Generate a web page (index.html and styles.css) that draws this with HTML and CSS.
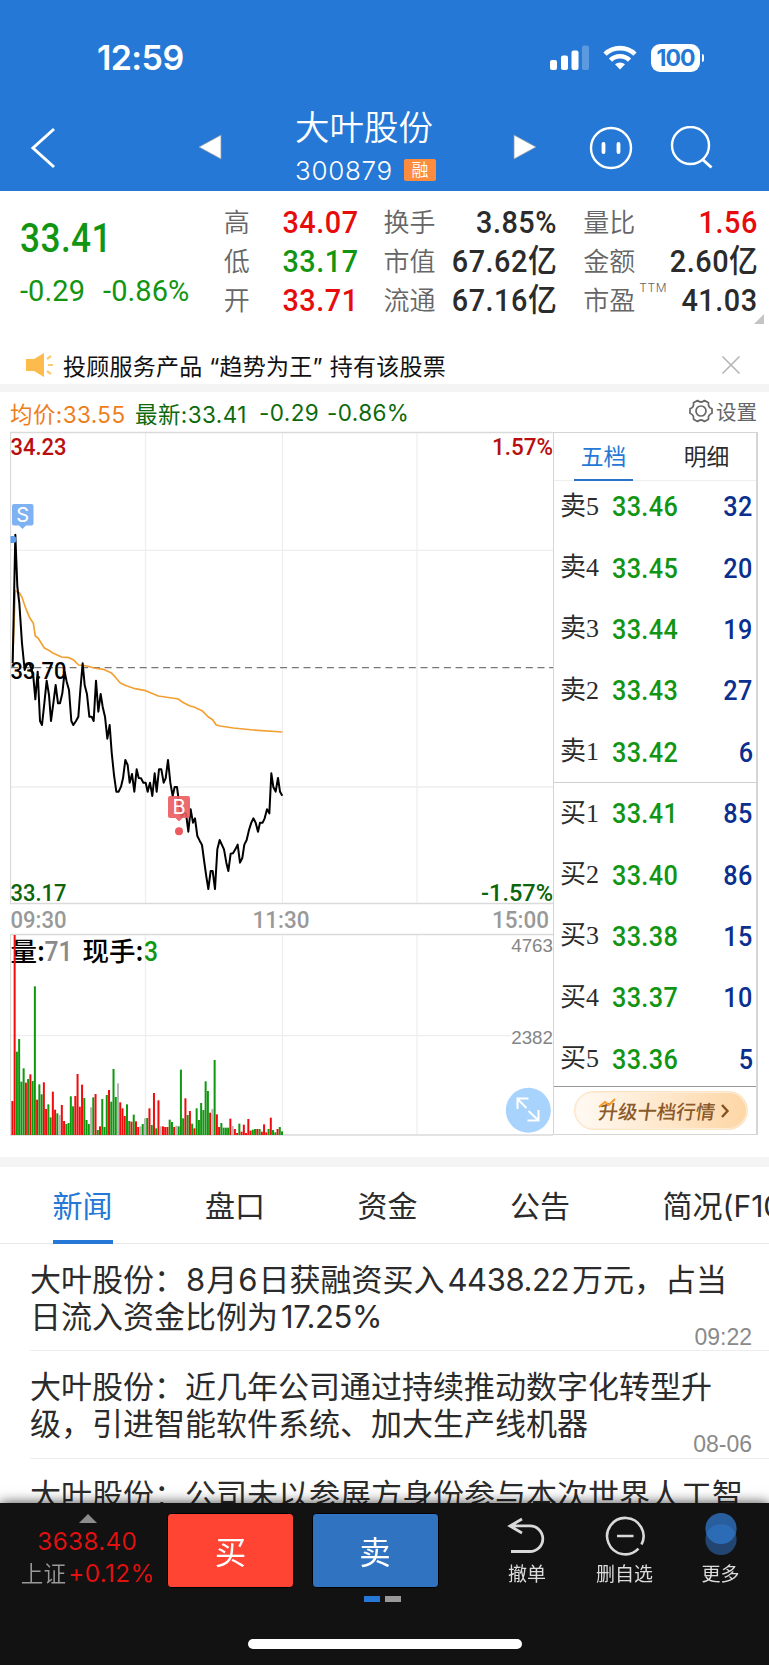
FILE: index.html
```html
<!DOCTYPE html>
<html lang="zh-CN">
<head>
  <meta charset="UTF-8">
  <title>大叶股份 300879</title>
  <meta name="viewport" content="width=device-width, initial-scale=1.0">
  <link rel="stylesheet" href="styles.css">
</head>
<body>
  <header class="header">
    <div class="status-bar">
      <span class="clock">12:59</span>
      <div class="status-icons">
        <svg width="40" height="26" viewBox="0 0 40 26" fill="#fff">
          <rect x="0" y="15" width="7" height="10" rx="2"/>
          <rect x="11" y="10.500" width="7" height="14.500" rx="2"/>
          <rect x="21.500" y="5.500" width="7" height="19.500" rx="2"/>
          <rect x="32" y="0.500" width="7" height="24.500" rx="2" opacity=".25"/>
        </svg>
        <svg class="wifi" width="34" height="25" viewBox="0 0 34 25" fill="none" stroke="#fff" stroke-width="4.600">
          <path d="M2 9.200a21.500 21.500 0 0 1 30 0"/>
          <path d="M7.500 15.200a13.500 13.500 0 0 1 19 0"/>
          <path d="M17 24.500l-5-5.200a7.500 7.500 0 0 1 10 0z" fill="#fff" stroke="none"/>
        </svg>
        <span class="battery">100</span>
        <span class="battery-tip"></span>
      </div>
    </div>
    <nav class="title-bar">
      <svg class="back" width="26" height="42" viewBox="0 0 26 42" fill="none" stroke="#fff" stroke-width="3"><path d="M24 2L3 21l21 19"/></svg>
      <svg class="prev" width="24" height="26" viewBox="0 0 24 26"><path d="M1 13L23 1v24z" fill="#fff" stroke="#8e98a8" stroke-width=".8"/></svg>
      <div class="stock">
        <div class="stock-name">大叶股份</div>
        <div class="stock-code"><span>300879</span><em>融</em></div>
      </div>
      <svg class="next" width="24" height="26" viewBox="0 0 24 26"><path d="M23 13L1 1v24z" fill="#fff" stroke="#8e98a8" stroke-width=".8"/></svg>
      <svg class="face" width="44" height="44" viewBox="0 0 44 44" fill="none" stroke="#fff" stroke-width="2.400">
        <circle cx="22" cy="22" r="20"/>
        <path d="M14.500 18v8M29.500 18v8" stroke-width="3.800" stroke-linecap="round"/>
      </svg>
      <svg class="search" width="44" height="44" viewBox="0 0 44 44" fill="none" stroke="#fff" stroke-width="2.400">
        <circle cx="20.500" cy="19.500" r="18.500"/>
        <path d="M32 33l9.500 8.500" stroke-width="3"/>
      </svg>
    </nav>
  </header>

  <section class="quote">
    <div class="quote-main">
      <div class="price num">33.41</div>
      <div class="change num"><span>-0.29</span><span>-0.86%</span></div>
    </div>
    <dl class="stats stats-a">
      <dt>高</dt><dd class="num red">34.07</dd>
      <dt>低</dt><dd class="num green">33.17</dd>
      <dt>开</dt><dd class="num red">33.71</dd>
    </dl>
    <dl class="stats stats-b">
      <dt>换手</dt><dd class="num">3.85%</dd>
      <dt>市值</dt><dd class="num">67.62亿</dd>
      <dt>流通</dt><dd class="num">67.16亿</dd>
    </dl>
    <dl class="stats stats-c">
      <dt>量比</dt><dd class="num red">1.56</dd>
      <dt>金额</dt><dd class="num">2.60亿</dd>
      <dt>市盈<sup>TTM</sup></dt><dd class="num">41.03</dd>
    </dl>
    <span class="corner"></span>
  </section>

  <section class="notice">
    <svg width="30" height="26" viewBox="0 0 30 26">
      <path d="M1 7h8l10-6v24l-10-6H1z" fill="#fdbb4e"/>
      <path d="M22 7l4-3M23 13h5M22 19l4 3" stroke="#fdca74" stroke-width="2.200" fill="none"/>
    </svg>
    <span>投顾服务产品 “趋势为王” 持有该股票</span>
    <svg class="close" width="20" height="20" viewBox="0 0 20 20" stroke="#b5b5b5" stroke-width="1.600"><path d="M1.500 1.500l17 17M18.500 1.500l-17 17"/></svg>
  </section>

  <section class="info-line">
    <span class="avg">均价:33.55</span>
    <span class="latest">最新:33.41</span>
    <span class="diff">-0.29</span>
    <span class="pct">-0.86%</span>
    <span class="settings">
      <svg width="24" height="24" viewBox="0 0 24 24" fill="none" stroke="#666" stroke-width="1.700" stroke-linejoin="round">
        <path d="M8.500 1.500q3.500 3 7 0l4 2.300q-.8 4.400 3.500 6v4.400q-4.300 1.600-3.500 6l-4 2.300q-3.500-3-7 0l-4-2.300q.8-4.400-3.500-6V9.800q4.300-1.600 3.500-6z"/>
        <circle cx="12" cy="12" r="5"/>
      </svg>设置
    </span>
  </section>

  <section class="trade">
    <svg class="chart" width="543" height="705" viewBox="10 431 543 705">
      <!-- grid -->
      <g class="grid">
        <path d="M145.500 432v471M282.500 432v471M417 432v471M11 550.300h543M11 787h543"/>
        <path d="M145.500 934v201M282.500 934v201M417 934v201M11 1035.700h500"/>
      </g>
      <g class="frame">
        <path d="M10.500 432v471.500M10.500 934v201M10 432.500h544M10 903.500h544M10 934.500h544M10 1135h544"/>
      </g>
      <path class="base-line" d="M11 667.700h543"/>

      <!-- one unit = one third of a pixel -->
      <g transform="translate(0 640) scale(.33333)">
        <polyline class="avg-line" points="38,60 46,-148 58,-142 66,-128 72,-110 80,-88 90,-65 100,-50 106,-12 114,-6 133,24 150,33 160,40 185,51 207,53 222,61 236,75 262,78 282,84 310,88 333,98 345,110 360,128 375,136 405,146 437,152 475,168 535,177 548,187 570,198 582,201 606,212 625,231 638,239 648,254 660,258 700,264 760,270 847,276"/>
        <polyline class="price-line" points="38,70 46,-316 52,-160 58,-110 66,10 74,90 80,75 88,70 94,85 100,110 106,178 113,95 120,243 126,255 133,190 140,122 147,165 153,243 160,190 167,135 174,190 180,190 187,160 194,95 200,125 207,150 214,243 220,255 228,243 235,230 241,150 248,70 254,135 261,163 268,230 275,230 281,243 288,122 295,215 302,162 308,200 315,230 322,296 329,255 335,337 342,405 349,455 356,455 363,440 369,415 376,360 383,375 389,428 396,402 403,455 410,388 416,414 423,415 430,428 437,428 443,455 450,428 457,468 464,400 470,455 477,388 484,388 491,428 497,415 504,360 511,428 518,468 524,441 531,441 538,495 545,530 551,520 558,520 565,575 572,508 579,548 585,535 592,588 599,602 606,615 612,660 619,710 625,747 632,693 638,693 645,747 652,628 659,600 672,628 679,668 685,693 692,641 699,640 706,628 713,614 720,668 727,654 733,614 740,600 747,570 754,548 760,535 767,548 774,575 780,548 788,548 794,535 801,508 808,520 814,400 820,441 827,455 834,414 840,455 847,467"/>
      </g>

      <!-- trade marks -->
      <path d="M14 504h17.500a2 2 0 0 1 2 2v17.500a2 2 0 0 1-2 2H26l-3.500 3.500-3.500-3.500h-5a2 2 0 0 1-2-2V506a2 2 0 0 1 2-2z" fill="#7fb2f2"/>
      <text class="mark" x="22.700" y="522" text-anchor="middle">S</text>
      <path d="M10.500 536h2.500a3.500 3.500 0 0 1 0 7h-2.500z" fill="#5c9ff0"/>
      <path d="M170 796h18a2 2 0 0 1 2 2v18a2 2 0 0 1-2 2h-5.500l-3.500 3.500-3.500-3.500H170a2 2 0 0 1-2-2v-18a2 2 0 0 1 2-2z" fill="#eb5a5f" fill-opacity=".9"/>
      <text class="mark" x="179" y="814" text-anchor="middle">B</text>
      <circle cx="179" cy="831.300" r="4" fill="#eb5a5f"/>

      <!-- axis labels -->
      <g class="axis">
        <text x="10.500" y="455" textLength="56" lengthAdjust="spacingAndGlyphs" fill="#b80f0f">34.23</text>
        <text x="492" y="455" textLength="61" lengthAdjust="spacingAndGlyphs" fill="#b80f0f">1.57%</text>
        <text x="10.500" y="678.500" textLength="56" lengthAdjust="spacingAndGlyphs" fill="#000">33.70</text>
        <text x="10.500" y="901" textLength="56" lengthAdjust="spacingAndGlyphs" fill="#0c650c">33.17</text>
        <text x="481" y="901" textLength="72" lengthAdjust="spacingAndGlyphs" fill="#0c650c">-1.57%</text>
      </g>
      <g class="axis times">
        <text x="10.500" y="928" textLength="56" lengthAdjust="spacingAndGlyphs">09:30</text>
        <text x="252.500" y="928" textLength="57" lengthAdjust="spacingAndGlyphs">11:30</text>
        <text x="492" y="928" textLength="57" lengthAdjust="spacingAndGlyphs">15:00</text>
      </g>
      <text class="vol-label" x="553" y="952" text-anchor="end">4763</text>
      <text class="vol-label" x="553" y="1044" text-anchor="end">2382</text>

      <g class="vol-title">
        <text x="10.500" y="961">量:</text>
        <text class="vol-num" x="44.500" y="961" textLength="28" lengthAdjust="spacingAndGlyphs" fill="#8a8a8a">71</text>
        <text x="82.500" y="961">现手:</text>
        <text class="vol-num" x="144" y="961" textLength="14" lengthAdjust="spacingAndGlyphs" fill="#0f970f">3</text>
      </g>

      <g id="volume"></g>

      <!-- expand button -->
      <circle cx="528.300" cy="1110.300" r="22.500" fill="#a8d3fd"/>
      <path d="M526.500 1108l-9-9M517.500 1109v-10.500h11M528.500 1111l9.500 9M538.500 1110v10.500h-11" fill="none" stroke="#fff" stroke-width="2"/>
    </svg>

    <aside class="book">
      <div class="book-tabs"><span class="active">五档</span><span>明细</span></div>
      <ul class="asks">
        <li><i>卖5</i><b>33.46</b><em>32</em></li>
        <li><i>卖4</i><b>33.45</b><em>20</em></li>
        <li><i>卖3</i><b>33.44</b><em>19</em></li>
        <li><i>卖2</i><b>33.43</b><em>27</em></li>
        <li><i>卖1</i><b>33.42</b><em>6</em></li>
      </ul>
      <ul class="bids">
        <li><i>买1</i><b>33.41</b><em>85</em></li>
        <li><i>买2</i><b>33.40</b><em>86</em></li>
        <li><i>买3</i><b>33.38</b><em>15</em></li>
        <li><i>买4</i><b>33.37</b><em>10</em></li>
        <li><i>买5</i><b>33.36</b><em>5</em></li>
      </ul>
      <div class="upgrade-row">
        <div class="upgrade">
          <svg class="spark" width="18" height="10" viewBox="0 0 18 10" fill="none" stroke="#f59a2c" stroke-width="2"><path d="M1 9l6-5 4 3 6-6"/></svg>
          <span>升级十档行情</span>
          <svg width="10" height="14" viewBox="0 0 10 14" fill="none" stroke="#85511f" stroke-width="2.400"><path d="M2 1l5.500 6L2 13"/></svg>
        </div>
      </div>
    </aside>
  </section>

  <nav class="tabs">
    <span class="active">新闻</span><span>盘口</span><span>资金</span><span>公告</span><span>简况(F10)</span>
  </nav>

  <ul class="news">
    <li>
      <p>大叶股份：<span class="n1">8</span>月<span class="n1">6</span>日获融资买入<span class="n2">4438.22</span>万元，占当<br>日流入资金比例为<span class="n2">17.25%</span></p>
      <time>09:22</time>
    </li>
    <li>
      <p>大叶股份：近几年公司通过持续推动数字化转型升<br>级，引进智能软件系统、加大生产线机器</p>
      <time>08-06</time>
    </li>
    <li>
      <p>大叶股份：公司未以参展方身份参与本次世界人工智</p>
    </li>
  </ul>

  <footer class="bottom-bar">
    <div class="actions">
      <div class="index">
        <span class="up"></span>
        <div class="index-value">3638.40</div>
        <div class="index-change"><span>上证</span>+0.12%</div>
      </div>
      <button class="buy">买</button>
      <button class="sell">卖</button>
      <div class="tool undo">
        <svg width="42" height="42" viewBox="0 0 42 42" fill="none" stroke="#d9d9d9" stroke-width="2.800"><path d="M5 36.500h19a12.800 12.800 0 0 0 0-25.600H4M16 4L4 11l12 7"/></svg>
        <span>撤单</span>
      </div>
      <div class="tool remove">
        <svg width="42" height="42" viewBox="0 0 42 42" fill="none" stroke="#d9d9d9" stroke-width="2.600"><path d="M37.500 29.500a18.200 18.200 0 1 0-3 4.200M13 21h16.500"/></svg>
        <span>删自选</span>
      </div>
      <div class="tool more">
        <svg width="42" height="42" viewBox="0 0 42 42" overflow="visible"><circle cx="21" cy="24.500" r="15.600" fill="#2b63a5" opacity=".65"/><circle cx="21" cy="13.500" r="15.600" fill="#3078cc" opacity=".75"/></svg>
        <span>更多</span>
      </div>
    </div>
    <div class="pager"><i class="on"></i><i></i></div>
    <div class="home"></div>
  </footer>

  <script src="volume.js"></script>
</body>
</html>
```
FILE: styles.css
```css
* {
  box-sizing: border-box;
}
html, body {
  margin: 0;
  padding: 0;
  width: 769px;
  height: 1665px;
  overflow: hidden;
  background: #fff;
}
body {
  font-family: Inter, "Noto Sans CJK SC", sans-serif;
  color: #2b2b2b;
}
ul, dl, dd, p {
  margin: 0;
  padding: 0;
  list-style: none;
}
i, em {
  font-style: normal;
}
svg {
  display: block;
  flex: none;
}
.num {
  font-family: Roboto, "Noto Sans CJK SC", sans-serif;
  font-weight: 500;
}
.red { color: #e60c0c; }
.green { color: #129512; }

/* Header */
.header {
  height: 191px;
  background: #2578d5;
  color: #fff;
}
.status-bar {
  display: flex;
  justify-content: space-between;
  align-items: center;
  height: 95px;
  padding: 20px 65px 0 97px;
}
.clock {
  font-size: 34px;
  font-weight: 600;
  letter-spacing: -0.6px;
}
.status-icons {
  display: flex;
  align-items: center;
}
.wifi {
  margin-left: 13px;
}
.battery {
  width: 49px;
  height: 28px;
  margin-left: 14px;
  border-radius: 9px;
  background: #fff;
  color: #2578d5;
  font-size: 23px;
  font-weight: 700;
  line-height: 28px;
  text-align: center;
  letter-spacing: -1px;
}
.battery-tip {
  width: 2px;
  height: 8px;
  margin-left: 2px;
  border-radius: 0 3px 3px 0;
  background: #fff;
}
.title-bar {
  display: flex;
  height: 96px;
  padding-left: 30px;
}
.back { margin-top: 32px; }
.prev { margin: 39px 0 0 142px; }
.stock {
  width: 145px;
  margin-left: 73px;
}
.stock-name {
  margin-top: 9px;
  font-size: 34.5px;
  font-weight: 350;
  line-height: 48px;
  white-space: nowrap;
}
.stock-code {
  display: flex;
  align-items: center;
  height: 30px;
  margin-top: 3px;
  font-size: 26px;
  font-weight: 350;
}
.stock-code span {
  width: 100px;
  letter-spacing: 0.7px;
}
.stock-code em {
  width: 32px;
  height: 22px;
  margin-left: 9px;
  border-radius: 2px;
  background: #fd8c3f;
  font-size: 17px;
  line-height: 22px;
  text-align: center;
}
.next { margin: 39px 0 0 73px; }
.face { margin: 31px 0 0 52px; }
.search { margin: 31px 0 0 37px; }

/* Quote numbers */
.quote {
  position: relative;
  display: flex;
  height: 153px;
  padding: 12px 11px 0 20px;
}
.quote-main {
  width: 204px;
  color: #129512;
}
.price {
  margin-top: 11px;
  font-size: 40px;
  line-height: 50px;
  letter-spacing: 0.5px;
  transform: scaleX(0.88);
  transform-origin: left;
}
.change {
  display: flex;
  gap: 18px;
  margin-top: 10px;
  font-size: 29px;
  font-weight: 400;
  line-height: 34px;
  letter-spacing: 0.1px;
}
.stats {
  display: grid;
  grid-template-columns: auto 1fr;
  grid-auto-rows: 39.2px;
  line-height: 39.2px;
}
.stats dt {
  font-size: 26px;
  font-weight: 350;
  color: #666;
  white-space: nowrap;
}
/* digits are drawn narrow, like the market font */
.stats dd {
  justify-self: end;
  font-size: 32px;
  letter-spacing: 0.6px;
  white-space: nowrap;
  transform: scaleX(0.9);
  transform-origin: right;
}
.stats sup {
  position: absolute;
  margin-left: 4px;
  font-size: 12px;
  letter-spacing: 0.6px;
  line-height: 14px;
  top: 90px;
}
.stats-a { width: 135px; }
.stats-b { width: 174px; margin-left: 25px; }
.stats-c { width: 175px; margin-left: 26px; }
.corner {
  position: absolute;
  right: 5px;
  top: 123px;
  border-left: 10px solid transparent;
  border-bottom: 10px solid #c4c4c4;
}

/* Adviser notice */
.notice {
  display: flex;
  align-items: center;
  height: 48px;
  padding: 2px 28px 0 25px;
  border-bottom: 8px solid #f4f4f4;
  font-size: 23px;
  letter-spacing: 0.25px;
  color: #111;
}
.notice span {
  margin-left: 8px;
}
.notice .close {
  margin-left: auto;
}

.info-line {
  display: flex;
  align-items: center;
  height: 39px;
  padding: 2px 12px 0 10px;
  font-size: 22.5px;
  letter-spacing: 0.4px;
  color: #0c6a0c;
  white-space: nowrap;
}
.avg { width: 125px; color: #ee7d1c; }
.latest { width: 124px; }
.diff { width: 68px; }
.settings {
  display: flex;
  align-items: center;
  gap: 3px;
  margin-left: auto;
  padding-bottom: 4px;
  font-size: 20.5px;
  letter-spacing: 0;
  color: #666;
}

/* Chart */
.trade {
  display: flex;
  height: 726px;
  padding-left: 10px;
}
.grid path { stroke: #eeeeee; stroke-width: 1.3; fill: none; }
.frame path { stroke: #dadada; stroke-width: 1.3; fill: none; }
.base-line { stroke: #777; stroke-width: 1.2; stroke-dasharray: 7 4.7; }
.avg-line { fill: none; stroke: #f3a032; stroke-width: 5; stroke-linejoin: round; }
.price-line { fill: none; stroke: #000; stroke-width: 6; stroke-linejoin: round; }
.mark { font: 400 20px Inter, sans-serif; fill: #fff; }
.axis text { font: 500 23.5px Roboto, sans-serif; }
.axis.times text { fill: #999; }
.vol-label { font: 18.8px "Liberation Sans", sans-serif; fill: #858585; }
.vol-title text { font: 500 26.5px "Noto Sans CJK SC", sans-serif; }
.vol-title .vol-num { font: 500 28px Roboto, sans-serif; }
#volume .r { fill: #f00c0c; }
#volume .g { fill: #0f970f; }
#volume .n { fill: #b5b5b5; }

/* Order book */
.book {
  width: 205px;
  height: 703px;
  margin-top: 1px;
  border: 1.5px solid #d5d5d5;
  border-right-width: 2px;
}
.book-tabs {
  display: flex;
  justify-content: space-between;
  height: 48px;
  padding: 0 20px;
  border-bottom: 1px solid #eee;
  font-size: 22.8px;
  line-height: 48px;
}
.book-tabs span {
  width: 59px;
  height: 48px;
  text-align: center;
}
.book-tabs .active {
  color: #2578d5;
  border-bottom: 2px solid #2a72c5;
}
.book ul {
  font-family: Roboto, sans-serif;
}
.asks {
  margin-top: -5px;
  height: 307px;
  border-bottom: 1px solid #cfcfcf;
}
.bids {
  height: 304px;
  border-bottom: 1px solid #999;
}
.book li {
  display: flex;
  align-items: center;
  height: 61.4px;
  padding: 0 3px 0 6px;
}
.book li i {
  width: 52px;
  font-family: "Liberation Serif", "Noto Sans CJK SC", serif;
  font-size: 26px;
  line-height: 30px;
  white-space: nowrap;
}
.book li b, .book li em {
  font-size: 28px;
  font-weight: 500;
  letter-spacing: 0.4px;
  transform: scaleX(0.9);
  transform-origin: left;
}
.book li b { color: #129512; }
.book li em {
  margin-left: auto;
  color: #0b2f8e;
  transform-origin: right;
}
.upgrade-row {
  display: flex;
  height: 46px;
  padding: 4px 0 0 20px;
}
.upgrade {
  position: relative;
  display: flex;
  align-items: center;
  width: 174px;
  height: 39px;
  padding-left: 24px;
  border: 1.5px solid #fde3c2;
  border-radius: 20px;
  background: linear-gradient(90deg, #fffaf4, #fdd6a5);
  box-shadow: inset 0 0 0 1px #fdeedc;
  color: #8b5a2b;
  font-size: 19.4px;
  font-weight: 500;
}
.upgrade span {
  margin-right: 5px;
  transform: skewX(-8deg);
}
.spark {
  position: absolute;
  left: 23px;
  top: 6px;
  z-index: 1;
}

/* Section tabs */
.tabs {
  display: flex;
  height: 87px;
  padding-left: 52.5px;
  border-top: 10px solid #f4f4f4;
  border-bottom: 1px solid #e8e8e8;
  font-size: 30px;
  line-height: 79px;
  white-space: nowrap;
}
.tabs span {
  flex: none;
  height: 77px;
  margin-right: 92.5px;
}
.tabs .active {
  color: #2578d5;
  border-bottom: 4px solid #2578d5;
}

/* News */
.news li {
  height: 107.3px;
  margin-left: 30px;
  padding-top: 17px;
  border-bottom: 1px solid #ededed;
}
.news p {
  font-size: 31px;
  line-height: 37px;
  white-space: nowrap;
}
.news .n1 { margin: 0 1px; }
.news .n2 { margin: 0 3px; letter-spacing: -0.4px; }
.news time {
  display: block;
  margin-top: -9px;
  padding-right: 17px;
  font: 23px/23px "Liberation Sans", sans-serif;
  text-align: right;
  color: #8a8a8a;
}

/* Bottom bar stays above the list */
.bottom-bar {
  position: fixed;
  left: 0;
  bottom: 0;
  width: 769px;
  height: 162px;
  background: #121212;
  box-shadow: 0 0 12px rgba(0, 0, 0, 0.75);
}
.actions {
  display: flex;
  height: 93px;
  padding-top: 10px;
}
.index {
  display: flex;
  flex-direction: column;
  align-items: center;
  width: 167px;
  color: #e31010;
  font-size: 24.5px;
}
.up {
  margin-top: 1px;
  margin-left: 9px;
  border: 9px solid transparent;
  border-top: 0;
  border-bottom-color: #8c8c8c;
}
.index-value {
  margin: 4px 0 0 8px;
  line-height: 29px;
  letter-spacing: 0.2px;
}
.index-change {
  margin: 3px 0 0 9px;
  line-height: 29px;
  letter-spacing: 0.3px;
  white-space: nowrap;
}
.index-change span {
  margin-right: 2px;
  font-size: 22.5px;
  font-weight: 350;
  color: #999;
}
.buy, .sell {
  width: 127px;
  height: 75px;
  padding: 0 0 2px;
  border: 1px solid #000;
  border-radius: 4px;
  background: #ff4433;
  color: #fff;
  font: 400 31.5px "Noto Sans CJK SC", sans-serif;
}
.sell {
  margin-left: 17.5px;
  background: #3073c1;
}
.tool {
  display: flex;
  flex-direction: column;
  align-items: center;
  width: 70px;
  padding-top: 2px;
  font-size: 19px;
  line-height: 26px;
  color: #dcdcdc;
}
.tool span { margin-top: 5px; }
.undo { margin-left: 53.5px; }
.remove { margin-left: 27.500px; }
.more { margin-left: 26px; }
.pager {
  display: flex;
  justify-content: center;
  gap: 5.5px;
  padding-right: 4px;
}
.pager i {
  width: 16px;
  height: 6px;
  background: #999;
}
.pager .on { background: #2578d5; }
.home {
  width: 274px;
  height: 10px;
  margin: 37px auto 0;
  border-radius: 5px;
  background: #fff;
}
```
FILE: volume.js
```js
// Volume bars, one per minute: colour (r up, g down, n flat) + height
const volume = (
  "r102 r600 g250 g288 g160 g200 r157 g168 r182 g162 g446 r106 g152 g122 r158 r78 g92 g53 r130 r76 " +
  "g65 n60 r90 r42 g33 g36 g116 g86 r117 r183 r85 r151 g111 g45 g33 n83 g113 r123 g15 r26 " +
  "g108 g24 g120 r135 g100 g198 g114 n155 r98 r80 r57 g92 g42 r40 g61 r41 r24 n26 g33 n50 " +
  "g51 r80 g30 r126 g20 r104 n26 r26 r24 r24 g46 g39 r24 n28 g26 g196 g50 r110 g60 r72 " +
  "g34 r20 g80 g45 g96 g75 g161 g132 r67 n78 g225 r62 r24 g36 g22 g22 g22 r49 n27 r18 " +
  "r6 g34 r10 r31 r6 r48 r13 g16 g18 r18 g18 r10 r32 r8 g18 r52 g15 g8 r18 g24 g11"
).split(" ");

const group = document.getElementById("volume");
const bottom = 1135;

volume.forEach((item, i) => {
  const h = item.slice(1) / 3;
  const rect = document.createElementNS("http://www.w3.org/2000/svg", "rect");
  rect.setAttribute("class", item[0]);
  rect.setAttribute("x", (11.4 + i * 2.247).toFixed(2));
  rect.setAttribute("y", (bottom - h).toFixed(2));
  rect.setAttribute("width", 2);
  rect.setAttribute("height", h.toFixed(2));
  group.appendChild(rect);
});
```
